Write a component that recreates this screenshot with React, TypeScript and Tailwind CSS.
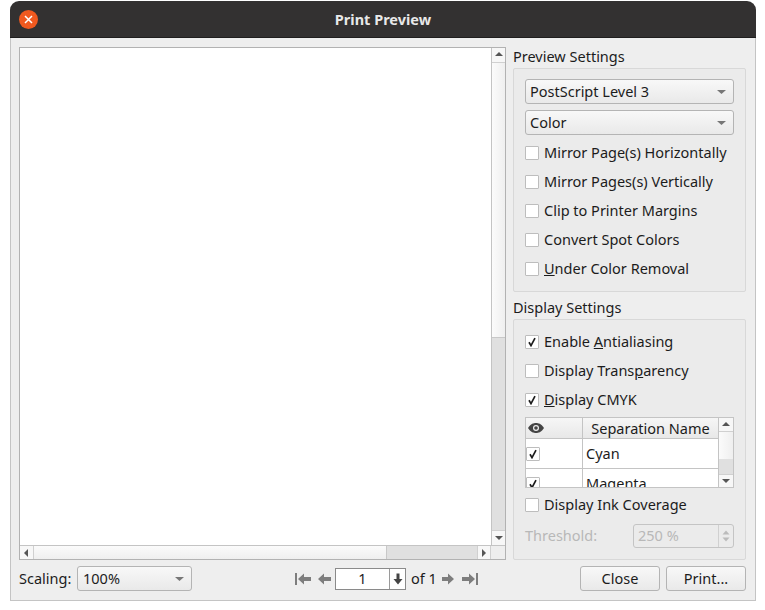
import { ReactNode } from 'react';

const font = { fontFamily: '"Noto Sans", "Open Sans", sans-serif' };

function Arrow({ dir, className = '' }: { dir: 'up' | 'down' | 'left' | 'right'; className?: string }) {
  const points = {
    up: '1,6 9,6 5,2',
    down: '1,3 9,3 5,7',
    left: '6,1 6,9 2,5',
    right: '3,1 3,9 7,5',
  }[dir];
  return (
    <svg width="10" height="10" viewBox="0 0 10 10" className={className}>
      <polygon points={points} fill="#555" />
    </svg>
  );
}

function Combo({ label, className = '' }: { label: string; className?: string }) {
  return (
    <div className={`h-[25px] flex items-center justify-between pl-[4px] pr-[7px] border border-[#b4b4b4] rounded-[3px] bg-gradient-to-b from-[#f8f8f8] to-[#e9e9e9] text-[14.5px] text-[#1c1c1c] ${className}`}>
      <span>{label}</span>
      <svg width="9" height="6" viewBox="0 0 9 6">
        <polygon points="0,1 9,1 4.5,5" fill="#777" />
      </svg>
    </div>
  );
}

function Box({ checked = false, className = '' }: { checked?: boolean; className?: string }) {
  return (
    <span className={`w-[14px] h-[14px] shrink-0 border border-[#bdbdbd] bg-white rounded-[1px] flex items-center justify-center ${className}`}>
      {checked && (
        <svg width="10" height="10" viewBox="0 0 10 10">
          <path d="M2 5.2 L4 8.6 L8 1.2" fill="none" stroke="#1c1c1c" strokeWidth="1.7" />
        </svg>
      )}
    </span>
  );
}

function Check({ label, checked = false }: { label: ReactNode; checked?: boolean }) {
  return (
    <div className="h-[29px] flex items-center gap-[5px] text-[14.5px] text-[#1c1c1c]">
      <Box checked={checked} />
      <span>{label}</span>
    </div>
  );
}

function Group({ title, className, children }: { title: string; className: string; children: ReactNode }) {
  return (
    <div>
      <div className="h-[21px] pb-[2px] flex items-center text-[14.5px] text-[#1c1c1c]">{title}</div>
      <div className={`border border-[#d8d8d8] rounded-[2px] bg-[#ebebeb] px-[11px] ${className}`}>{children}</div>
    </div>
  );
}

function NavIcon({ dir, bar = false }: { dir: 'left' | 'right'; bar?: boolean }) {
  const flip = dir === 'right' ? 'scale(-1,1) translate(-18,0)' : undefined;
  return (
    <svg width={bar ? 18 : 15} height="14" viewBox={bar ? '0 0 18 14' : '2 0 15 14'}>
      <g transform={flip} fill="#7d7d7d">
        {bar && <rect x="1" y="1" width="2" height="12" />}
        <polygon points="4,7 10,1.5 10,5 17,5 17,9 10,9 10,12.5" />
      </g>
    </svg>
  );
}

function Eye() {
  return (
    <svg width="16" height="10" viewBox="0 0 16 10">
      <path d="M0 5 C3 0.5 5.5 0 8 0 C10.5 0 13 0.5 16 5 C13 9.5 10.5 10 8 10 C5.5 10 3 9.5 0 5 Z" fill="#444" />
      <circle cx="8" cy="5" r="3" fill="#eee" />
      <circle cx="8" cy="5" r="1.8" fill="#444" />
    </svg>
  );
}

export default function App() {
  return (
    <div className="w-[765px] h-[610px] bg-white pl-[10px] pt-px" style={font}>
      <div className="w-[746px] h-[600px] flex flex-col">
        {/* Title bar */}
        <div className="h-[37px] shrink-0 rounded-t-[9px] bg-[#333131] border-b border-[#1f1e1e] flex items-center relative">
          <div className="ml-[9px] w-[19px] h-[19px] rounded-full bg-[#f0591f] flex items-center justify-center">
            <svg width="9" height="9" viewBox="0 0 9 9">
              <path d="M1 1 L8 8 M8 1 L1 8" stroke="#fff" strokeWidth="1.5" />
            </svg>
          </div>
          <div className="absolute inset-0 pt-[2px] flex items-center justify-center text-[14.5px] font-bold text-[#e8e8e8]">Print Preview</div>
        </div>

        {/* Dialog body */}
        <div className="flex-1 flex gap-[7px] bg-[#eeeeee] border-x border-b border-[#c4c4c4] pl-[8px] pt-[9px]">
          {/* Left column */}
          <div className="w-[487px] flex flex-col">
            <div className="h-[513px] border border-[#b2b2b2] flex flex-col">
              <div className="flex-1 flex min-h-0">
                <div className="flex-1 bg-white" />
                <div className="w-[14px] border-l border-[#c4c4c4] flex flex-col bg-[#e0e0e0]">
                  <div className="h-[15px] bg-[#f7f7f7] border-b border-[#d0d0d0] flex items-center justify-center"><Arrow dir="up" /></div>
                  <div className="h-[275px] bg-gradient-to-r from-[#fbfbfb] to-[#efefef] border-b border-[#c8c8c8]" />
                  <div className="flex-1" />
                  <div className="h-[15px] bg-[#f7f7f7] border-t border-[#d0d0d0] flex items-center justify-center"><Arrow dir="down" /></div>
                </div>
              </div>
              <div className="h-[14px] shrink-0 border-t border-[#c4c4c4] flex bg-[#e0e0e0]">
                <div className="w-[14px] bg-[#f7f7f7] border-r border-[#d0d0d0] flex items-center justify-center"><Arrow dir="left" /></div>
                <div className="w-[353px] bg-gradient-to-b from-[#fbfbfb] to-[#efefef] border-r border-[#c8c8c8]" />
                <div className="flex-1" />
                <div className="w-[14px] bg-[#f7f7f7] border-x border-[#d0d0d0] flex items-center justify-center"><Arrow dir="right" /></div>
                <div className="w-[14px] bg-[#eeeeee]" />
              </div>
            </div>

            {/* Bottom controls */}
            <div className="mt-[6px] flex items-center text-[14.5px] text-[#1c1c1c]">
              <span className="w-[58px]">Scaling:</span>
              <Combo label="100%" className="w-[115px] pl-[5px]" />
              <div className="ml-[102px] flex items-center">
                <NavIcon dir="left" bar />
                <span className="ml-[4px] flex"><NavIcon dir="left" /></span>
                <div className="ml-[4px] w-[71px] h-[22px] border border-[#8a8a8a] bg-white flex">
                  <div className="flex-1 flex items-center justify-center">1</div>
                  <div className="w-[16px] border-l border-[#9a9a9a] flex items-center justify-center">
                    <svg width="10" height="12" viewBox="0 0 10 12">
                      <path d="M3.5 0.5 H6.5 V6 H9.5 L5 11.5 L0.5 6 H3.5 Z" fill="#444" />
                    </svg>
                  </div>
                </div>
                <span className="ml-[5px]">of 1</span>
                <span className="ml-[5px] flex"><NavIcon dir="right" /></span>
                <span className="ml-[4px] flex"><NavIcon dir="right" bar /></span>
              </div>
            </div>
          </div>

          {/* Right column */}
          <div className="w-[233px] flex flex-col">
            <Group title="Preview Settings" className="h-[224px] pt-[10px]">
              <Combo label="PostScript Level 3" />
              <Combo label="Color" className="mt-[6px]" />
              <div className="mt-[3px]">
                <Check label="Mirror Page(s) Horizontally" />
                <Check label="Mirror Pages(s) Vertically" />
                <Check label="Clip to Printer Margins" />
                <Check label="Convert Spot Colors" />
                <Check label={<><span className="underline">U</span>nder Color Removal</>} />
              </div>
            </Group>

            <div className="mt-[6px]">
              <Group title="Display Settings" className="h-[241px] pt-[7px]">
                <Check checked label={<>Enable <span className="underline">A</span>ntialiasing</>} />
                <Check label={<>Display Trans<span className="underline">p</span>arency</>} />
                <Check checked label={<><span className="underline">D</span>isplay CMYK</>} />

                <div className="mt-[3px] h-[71px] border border-[#c4c4c4] flex text-[14.5px] text-[#1c1c1c] overflow-hidden">
                  <div className="flex-1 bg-white min-w-0">
                    <div className="h-[21px] pt-[2px] flex border-b border-[#c4c4c4] bg-gradient-to-b from-[#f6f6f6] to-[#e8e8e8]">
                      <div className="w-[57px] -mt-[2px] border-r border-[#c4c4c4] flex items-center pl-[2px]"><Eye /></div>
                      <div className="flex-1 flex items-center justify-center">Separation Name</div>
                    </div>
                    <div className="h-[30px] flex border-b border-[#c4c4c4]">
                      <div className="w-[57px] border-r border-[#c4c4c4] flex items-center"><Box checked /></div>
                      <div className="flex-1 flex items-center pl-[3px]">Cyan</div>
                    </div>
                    <div className="h-[30px] flex">
                      <div className="w-[57px] border-r border-[#c4c4c4] flex items-center"><Box checked /></div>
                      <div className="flex-1 flex items-center pl-[3px]">Magenta</div>
                    </div>
                  </div>
                  <div className="w-[15px] shrink-0 border-l border-[#c4c4c4] flex flex-col bg-[#e0e0e0]">
                    <div className="h-[14px] bg-[#f7f7f7] border-b border-[#d0d0d0] flex items-center justify-center"><Arrow dir="up" /></div>
                    <div className="h-[27px] bg-gradient-to-r from-[#fbfbfb] to-[#efefef]" />
                    <div className="flex-1" />
                    <div className="h-[13px] bg-[#f7f7f7] border-t border-[#d0d0d0] flex items-center justify-center"><Arrow dir="down" /></div>
                  </div>
                </div>

                <div className="mt-[2px]">
                  <Check label="Display Ink Coverage" />
                </div>
                <div className="mt-[5px] flex items-center justify-between text-[14.5px] text-[#b8b8b8]">
                  <span>Threshold:</span>
                  <div className="w-[101px] h-[24px] border border-[#c4c4c4] rounded-[3px] flex bg-[#ebebeb]">
                    <div className="flex-1 flex items-center pl-[4px]">250 %</div>
                    <div className="w-[15px] border-l border-[#d0d0d0] flex flex-col items-center justify-center gap-[2px]">
                      <svg width="8" height="5" viewBox="0 0 8 5"><polygon points="0.5,4.5 7.5,4.5 4,0.5" fill="#bbb" /></svg>
                      <svg width="8" height="5" viewBox="0 0 8 5"><polygon points="0.5,0.5 7.5,0.5 4,4.5" fill="#bbb" /></svg>
                    </div>
                  </div>
                </div>
              </Group>
            </div>

            <div className="mt-[6px] flex justify-end gap-[6px] text-[14.5px] text-[#1c1c1c]">
              <div className="w-[80px] h-[25px] border border-[#b4b4b4] rounded-[3px] bg-gradient-to-b from-[#f8f8f8] to-[#e9e9e9] flex items-center justify-center">Close</div>
              <div className="w-[80px] h-[25px] border border-[#b4b4b4] rounded-[3px] bg-gradient-to-b from-[#f8f8f8] to-[#e9e9e9] flex items-center justify-center">Print...</div>
            </div>
          </div>
        </div>
      </div>
    </div>
  );
}
